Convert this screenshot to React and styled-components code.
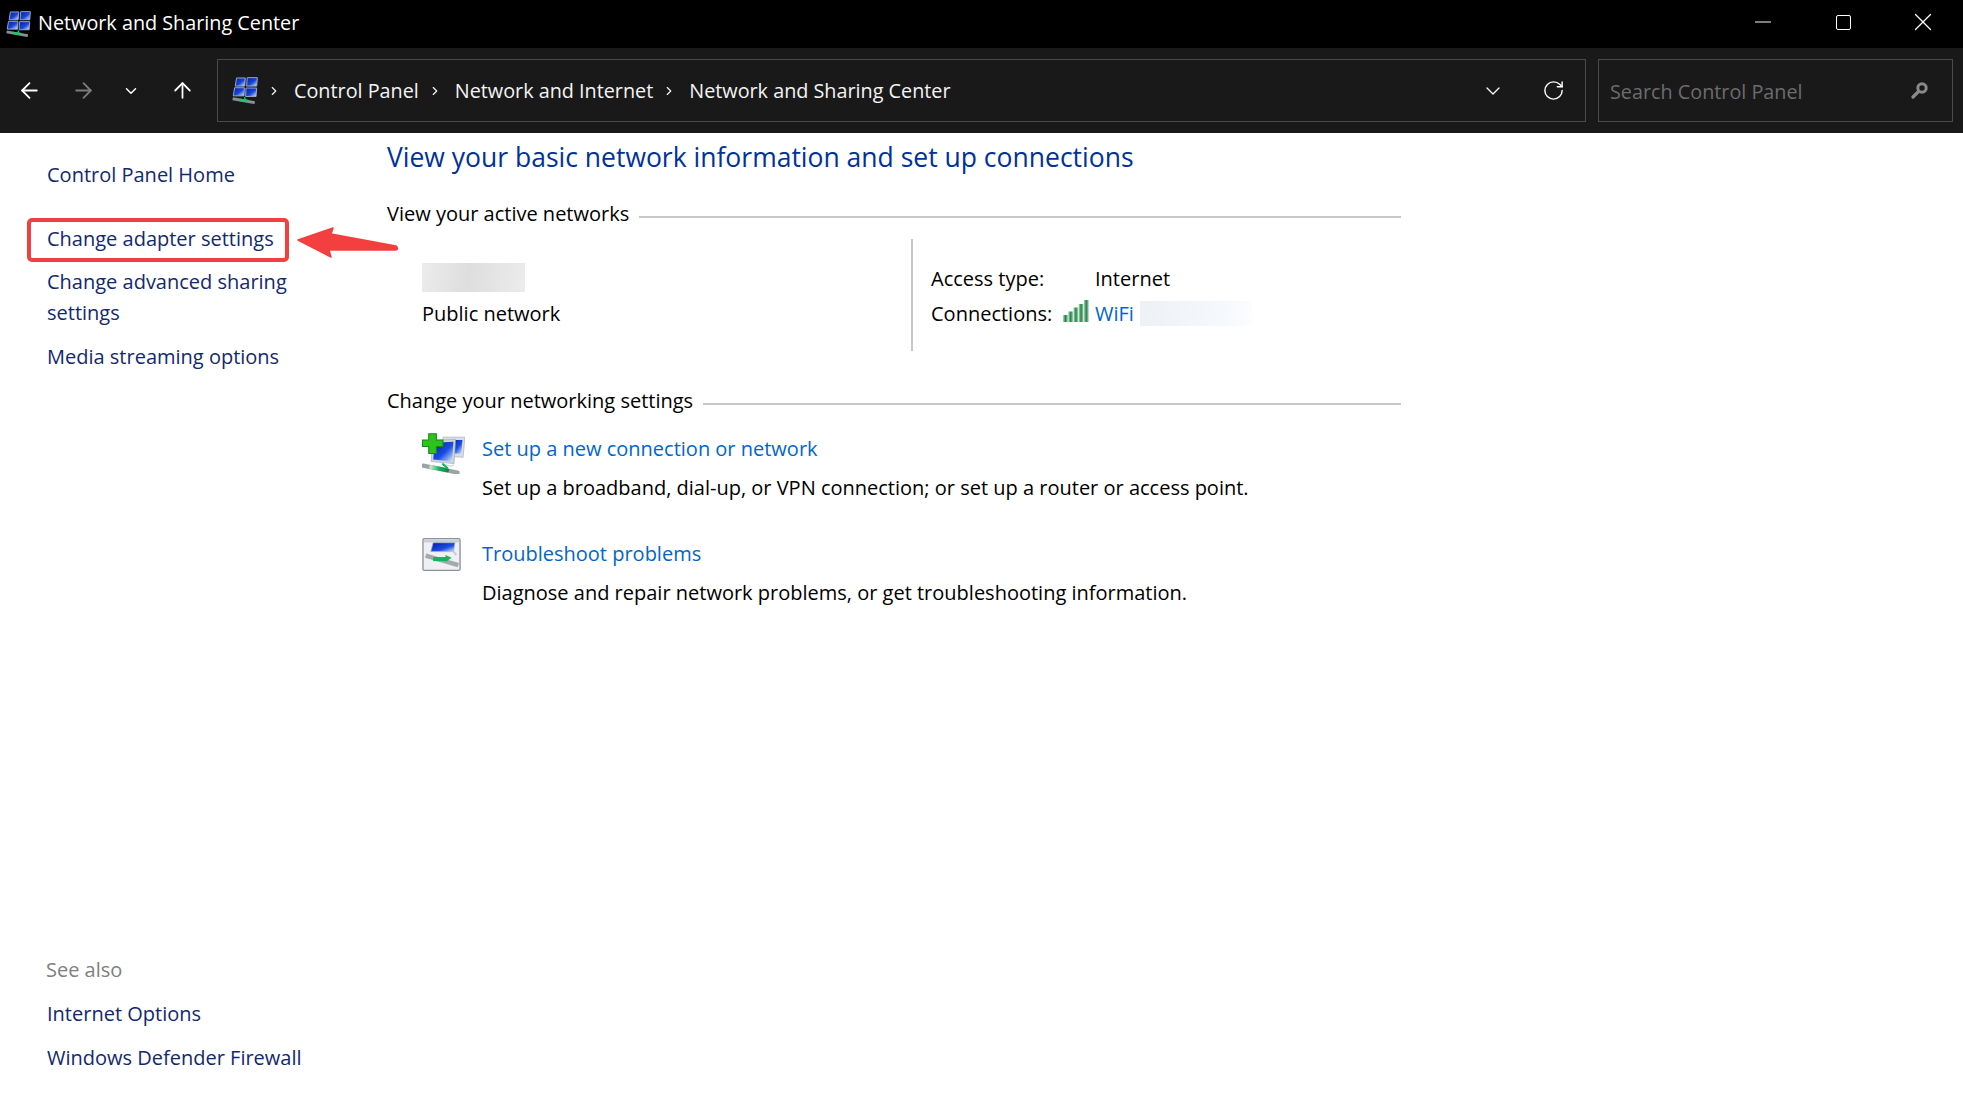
import React from 'react';
import styled, { createGlobalStyle } from 'styled-components';
import { ArrowLeft, ArrowRight, ArrowUp, ChevronDown, ChevronRight, RotateCw, Minus, X } from 'lucide-react';

const GlobalStyle = createGlobalStyle`
  html, body {
    margin: 0;
    padding: 0;
    height: 100%;
    background: #fff;
  }
  #root {
    height: 100%;
  }
  * {
    box-sizing: border-box;
  }
`;

const Window = styled.div`
  height: 1103px;
  display: flex;
  flex-direction: column;
  position: relative;
  overflow: hidden;
  font-family: 'Open Sans', 'Noto Sans', sans-serif;
  font-size: 20px;
  line-height: 31px;
  color: #000;
`;

const TitleBar = styled.div`
  height: 48px;
  flex: none;
  background: #000;
  color: #fff;
  display: flex;
  align-items: center;
  padding-left: 6px;
`;

const TitleText = styled.span`
  flex: 1;
  margin-left: 7px;
  padding-bottom: 3px;
  font-size: 19.8px;
`;

const WinButton = styled.button`
  width: 80px;
  height: 48px;
  background: none;
  border: 0;
  padding: 0 0 4px;
  color: #fff;
  display: flex;
  align-items: center;
  justify-content: center;
`;

const MaxBox = styled.span`
  width: 15px;
  height: 15px;
  border: 1.5px solid #fff;
  border-radius: 2px;
`;

const Toolbar = styled.div`
  height: 85px;
  flex: none;
  background: #191919;
  color: #fff;
  display: flex;
  align-items: center;
  padding-left: 2px;
`;

const NavButton = styled.button`
  width: ${(p) => p.$width}px;
  height: 40px;
  flex: none;
  background: none;
  border: 0;
  padding: 0;
  color: ${(p) => (p.$dim ? '#7c7c7c' : '#fff')};
  display: flex;
  align-items: center;
  justify-content: center;
`;

const AddressBox = styled.div`
  width: 1369px;
  height: 63px;
  margin-left: 5px;
  border: 1.5px solid #4a4a4a;
  display: flex;
  align-items: center;
  padding-left: 14px;
  font-size: 19.8px;
`;

const Crumb = styled.span`
  margin-left: ${(p) => p.$gap}px;
  color: #f4f4f4;
`;

const CrumbSep = styled.span`
  margin-left: ${(p) => p.$gap}px;
  display: flex;
  color: #f4f4f4;
`;

const AddressTools = styled.div`
  margin-left: auto;
  display: flex;
  align-items: center;
  gap: 37px;
  padding-right: 20px;
`;

const SearchBox = styled.div`
  width: 355px;
  height: 63px;
  margin-left: 12px;
  border: 1.5px solid #4a4a4a;
  display: flex;
  align-items: center;
  justify-content: space-between;
  padding: 0 24px 0 11px;
  color: #6c6c6c;
  font-size: 19.8px;
`;

const SearchHint = styled.span`
  padding-top: 2px;
`;

const Body = styled.div`
  flex: 1;
  display: flex;
  min-height: 0;
`;

const Sidebar = styled.nav`
  width: 387px;
  flex: none;
  display: flex;
  flex-direction: column;
  gap: 13px;
  padding: 26px 0 30px 47px;
`;

const SideLink = styled.a`
  display: block;
  width: 262px;
  color: #12296f;
  margin-top: ${(p) => p.$space || 0}px;
`;

const SeeAlso = styled.div`
  margin-top: auto;
  margin-left: -1px;
  color: #808080;
`;

const Highlight = styled.span`
  position: absolute;
  left: 27px;
  top: 218px;
  width: 262px;
  height: 44px;
  border: 4px solid #f33f3f;
  border-radius: 5px;
`;

const Arrow = styled.svg`
  position: absolute;
  left: 296px;
  top: 226px;
`;

const Main = styled.main`
  width: 1014px;
  flex: none;
  padding-top: 6px;
`;

const Heading = styled.h1`
  margin: 0;
  font-size: 26.5px;
  font-weight: 400;
  line-height: 36px;
  color: #003399;
`;

const SectionHead = styled.div`
  display: flex;
  align-items: center;
  gap: 10px;
  margin-top: ${(p) => p.$top}px;
`;

const SectionLine = styled.span`
  flex: 1;
  height: 2px;
  margin-top: 6px;
  background: #c8c8c8;
`;

const NetworkRow = styled.div`
  display: flex;
  height: 112px;
  margin-top: 10px;
`;

const NetworkName = styled.div`
  width: 524px;
  padding: 24px 0 0 35px;
`;

const Blur = styled.div`
  width: ${(p) => p.$width}px;
  height: ${(p) => p.$height}px;
  background: ${(p) => p.$fill};
`;

const PublicLabel = styled.div`
  margin-top: 6px;
`;

const NetworkInfo = styled.div`
  flex: 1;
  border-left: 2px solid #c8c8c8;
  padding: 24px 0 0 18px;
  display: grid;
  grid-template-columns: 132px 32px 1fr;
  grid-auto-rows: 35px;
  align-items: start;
`;

const InfoLabel = styled.span`
  grid-column: span ${(p) => p.$span || 1};
`;

const WifiCell = styled.span`
  display: flex;
  align-items: center;
  gap: 6px;
`;

const WifiGlyph = styled.span`
  display: flex;
  padding-top: 2px;
`;

const TaskLink = styled.a`
  color: #0066cc;
`;

const Task = styled.div`
  display: flex;
  margin-top: ${(p) => p.$top}px;
  padding-left: 35px;
`;

const TaskIcon = styled.div`
  width: 60px;
  flex: none;
`;

const TaskText = styled.div`
  display: flex;
  flex-direction: column;
  gap: 8px;
`;

const NetLogo = ({ id, size }) => (
  <svg width={size} height={size * 1.05} viewBox="0 0 80 84">
    <defs>
      <linearGradient id={id} x1="0" y1="0" x2="1" y2="1">
        <stop offset="0" stopColor="#0818b4" />
        <stop offset="0.55" stopColor="#1746d6" />
        <stop offset="1" stopColor="#e6efff" />
      </linearGradient>
    </defs>
    <g fill={`url(#${id})`} stroke="#9aa8c6" strokeWidth="3">
      <polygon points="14,3 41,3 39,28 10,28" />
      <polygon points="47,2 78,2 76,28 45,28" />
      <polygon points="8,33 38,33 37,58 4,58" />
      <polygon points="43,34 76,34 74,60 42,60" />
    </g>
    <path d="M2 67 L70 79" stroke="#8b8f93" strokeWidth="9" />
    <path d="M22 70 L50 74" stroke="#25c36a" strokeWidth="8" />
    <path d="M38 62 L42 70" stroke="#25c36a" strokeWidth="4" />
  </svg>
);

const SetupIcon = () => (
  <svg width="43" height="41" viewBox="0 0 123 118">
    <defs>
      <linearGradient id="setupBlue" x1="0" y1="0" x2="1" y2="1">
        <stop offset="0" stopColor="#0615b8" />
        <stop offset="0.55" stopColor="#1a4fe0" />
        <stop offset="1" stopColor="#e6efff" />
      </linearGradient>
      <linearGradient id="setupGreen" x1="0" y1="0" x2="1" y2="0">
        <stop offset="0" stopColor="#b6e8c6" />
        <stop offset="0.5" stopColor="#12b45c" />
        <stop offset="1" stopColor="#0a8f48" />
      </linearGradient>
    </defs>
    <polygon points="60,12 123,12 118,70 60,66" fill="#d8dde6" stroke="#aab1bd" strokeWidth="2" />
    <polygon points="84,20 116,20 113,60 84,58" fill="url(#setupBlue)" />
    <polygon points="30,22 96,18 92,88 26,82" fill="#cfd5df" stroke="#a6adb9" strokeWidth="2" />
    <polygon points="36,28 90,25 86,82 32,76" fill="url(#setupBlue)" />
    <path d="M60 88 L82 96 L92 92" fill="none" stroke="#d6d9de" strokeWidth="4" />
    <path d="M3 94 L102 114" stroke="#9ea3a8" strokeWidth="12" strokeLinecap="round" />
    <path d="M26 98 L72 107" stroke="url(#setupGreen)" strokeWidth="12" strokeLinecap="round" />
    <path d="M60 90 L72 100" stroke="#12b45c" strokeWidth="6" strokeLinecap="round" />
    <path
      d="M19 2 H41 V20 H60 V39 H41 V59 H19 V39 H1 V20 H19 Z"
      fill="#2cc41c"
      stroke="#178a14"
      strokeWidth="3"
    />
  </svg>
);

const TroubleIcon = () => (
  <svg width="39" height="33" viewBox="0 0 113 97">
    <defs>
      <linearGradient id="troubleBlue" x1="0" y1="0" x2="1" y2="1">
        <stop offset="0" stopColor="#0615b8" />
        <stop offset="0.6" stopColor="#1a4fe0" />
        <stop offset="1" stopColor="#dce8ff" />
      </linearGradient>
    </defs>
    <rect x="2" y="2" width="109" height="93" rx="4" fill="#eef0f3" stroke="#8e939a" strokeWidth="4" />
    <rect x="5" y="5" width="103" height="8" fill="#c9ced6" />
    <polygon points="32,14 96,14 92,40 25,40" fill="url(#troubleBlue)" stroke="#a8afbb" strokeWidth="2" />
    <path d="M92 40 L100 50" stroke="#c9ced6" strokeWidth="6" />
    <path d="M10 52 L106 80" stroke="#a4a9ae" strokeWidth="13" />
    <path d="M32 62 L72 62" stroke="#12b45c" strokeWidth="12" />
    <path d="M68 50 L86 58 L70 70 Z" fill="#12b45c" />
  </svg>
);

const WifiIcon = () => (
  <svg width="26" height="22" viewBox="0 0 26 22">
    <defs>
      <linearGradient id="wifiBar" x1="0" y1="0" x2="1" y2="0">
        <stop offset="0" stopColor="#b7dec4" />
        <stop offset="0.5" stopColor="#237f49" />
        <stop offset="1" stopColor="#b7dec4" />
      </linearGradient>
    </defs>
    <g fill="url(#wifiBar)">
      <rect x="0" y="15" width="5" height="7" />
      <rect x="5.2" y="11.5" width="5" height="10.5" />
      <rect x="10.4" y="7.5" width="5" height="14.5" />
      <rect x="15.6" y="4" width="5" height="18" />
      <rect x="20.8" y="0" width="5" height="22" />
    </g>
  </svg>
);

const SearchIcon = () => (
  <svg width="17" height="17" viewBox="0 0 17 17">
    <circle cx="11" cy="6" r="4.2" fill="none" stroke="#8a8a8a" strokeWidth="3" />
    <path d="M7.5 9.5 L2 15" stroke="#8a8a8a" strokeWidth="3.2" strokeLinecap="round" />
  </svg>
);

const App = () => {
  return (
    <Window>
      <GlobalStyle />
      <TitleBar>
        <NetLogo id="titleLogo" size={25} />
        <TitleText>Network and Sharing Center</TitleText>
        <WinButton aria-label="Minimize">
          <Minus size={26} strokeWidth={0.9} />
        </WinButton>
        <WinButton aria-label="Maximize">
          <MaxBox />
        </WinButton>
        <WinButton aria-label="Close">
          <X size={30} strokeWidth={1} />
        </WinButton>
      </TitleBar>
      <Toolbar>
        <NavButton $width={54}>
          <ArrowLeft size={25} strokeWidth={1.7} />
        </NavButton>
        <NavButton $width={54} $dim>
          <ArrowRight size={25} strokeWidth={1.7} />
        </NavButton>
        <NavButton $width={42}>
          <ChevronDown size={18} strokeWidth={2} />
        </NavButton>
        <NavButton $width={60}>
          <ArrowUp size={25} strokeWidth={1.7} />
        </NavButton>
        <AddressBox>
          <NetLogo id="addressLogo" size={26} />
          <CrumbSep $gap={9}><ChevronRight size={14} strokeWidth={2} /></CrumbSep>
          <Crumb $gap={13}>Control Panel</Crumb>
          <CrumbSep $gap={9}><ChevronRight size={14} strokeWidth={2} /></CrumbSep>
          <Crumb $gap={13}>Network and Internet</Crumb>
          <CrumbSep $gap={9}><ChevronRight size={14} strokeWidth={2} /></CrumbSep>
          <Crumb $gap={13}>Network and Sharing Center</Crumb>
          <AddressTools>
            <ChevronDown size={24} strokeWidth={1.3} />
            <RotateCw size={23} strokeWidth={1.5} />
          </AddressTools>
        </AddressBox>
        <SearchBox>
          <SearchHint>Search Control Panel</SearchHint>
          <SearchIcon />
        </SearchBox>
      </Toolbar>
      <Body>
        <Sidebar>
          <SideLink>Control Panel Home</SideLink>
          <SideLink $space={20}>Change adapter settings</SideLink>
          <SideLink $space={-1}>Change advanced sharing settings</SideLink>
          <SideLink>Media streaming options</SideLink>
          <SeeAlso>See also</SeeAlso>
          <SideLink>Internet Options</SideLink>
          <SideLink>Windows Defender Firewall</SideLink>
        </Sidebar>
        <Main>
          <Heading>View your basic network information and set up connections</Heading>
          <SectionHead $top={23}>
            <span>View your active networks</span>
            <SectionLine />
          </SectionHead>
          <NetworkRow>
            <NetworkName>
              <Blur $width={103} $height={29} $fill="linear-gradient(100deg, #ececec, #dedede 45%, #ececec)" />
              <PublicLabel>Public network</PublicLabel>
            </NetworkName>
            <NetworkInfo>
              <InfoLabel $span={2}>Access type:</InfoLabel>
              <span>Internet</span>
              <span>Connections:</span>
              <WifiGlyph><WifiIcon /></WifiGlyph>
              <WifiCell>
                <TaskLink>WiFi</TaskLink>
                <Blur $width={112} $height={25} $fill="linear-gradient(100deg, #edf0f5, #f5f8fc 70%, #fdfdfe)" />
              </WifiCell>
            </NetworkInfo>
          </NetworkRow>
          <SectionHead $top={34}>
            <span>Change your networking settings</span>
            <SectionLine />
          </SectionHead>
          <Task $top={17}>
            <TaskIcon><SetupIcon /></TaskIcon>
            <TaskText>
              <TaskLink>Set up a new connection or network</TaskLink>
              <span>Set up a broadband, dial-up, or VPN connection; or set up a router or access point.</span>
            </TaskText>
          </Task>
          <Task $top={35}>
            <TaskIcon><TroubleIcon /></TaskIcon>
            <TaskText>
              <TaskLink>Troubleshoot problems</TaskLink>
              <span>Diagnose and repair network problems, or get troubleshooting information.</span>
            </TaskText>
          </Task>
        </Main>
      </Body>
      <Highlight />
      <Arrow width="104" height="34" viewBox="0 0 104 34">
        <path
          d="M2 14 L37 2 L35 8 L100 20 Q103 23 100 24 L33 24 L35 31 Z"
          fill="#f33f3f"
          stroke="#f33f3f"
          strokeWidth="1.5"
          strokeLinejoin="round"
        />
      </Arrow>
    </Window>
  );
};

export default App;
